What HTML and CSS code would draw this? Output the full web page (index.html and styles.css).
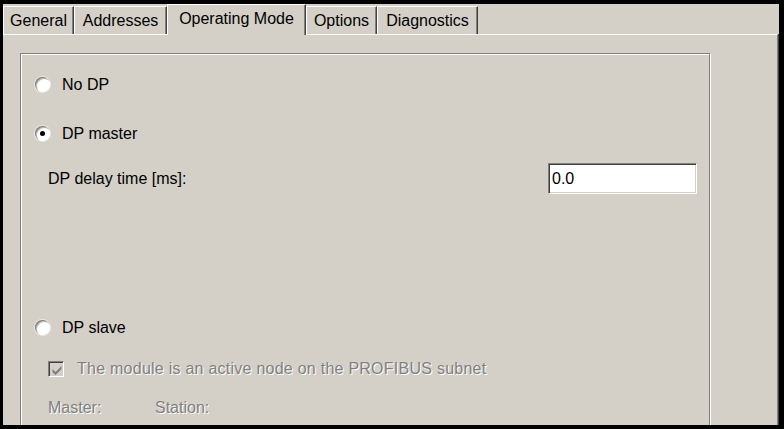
FILE: index.html
```html
<!DOCTYPE html>
<html>
<head>
<meta charset="utf-8">
<link rel="stylesheet" href="styles.css">
</head>
<body>
<div class="frame">
  <div class="dialog">
    <div class="tabs">
      <div class="tab t1">General</div>
      <div class="tab t2">Addresses</div>
      <div class="tab t3 sel">Operating Mode</div>
      <div class="tab t4">Options</div>
      <div class="tab t5">Diagnostics</div>
    </div>
    <div class="page">
      <div class="group">
        <div class="row radio-row r1"><span class="radio"></span><span class="label">No DP</span></div>
        <div class="row radio-row r2"><span class="radio on"></span><span class="label">DP master</span></div>
        <div class="row field-row r3"><span class="label">DP delay time [ms]:</span><div class="input">0.0</div></div>
        <div class="row radio-row r4"><span class="radio"></span><span class="label">DP slave</span></div>
        <div class="row check-row r5">
          <span class="check"><svg width="12" height="12" viewBox="0 0 12 12"><path d="M1.5 5 L4.5 8 L10.5 2 L10.5 5 L4.5 11 L1.5 8 Z" fill="#808080"/></svg></span>
          <span class="label disabled wide">The module is an active node on the PROFIBUS subnet</span>
        </div>
        <div class="row sub-row r6"><span class="label disabled master">Master:</span><span class="label disabled">Station:</span></div>
      </div>
    </div>
  </div>
</div>
</body>
</html>
```
FILE: styles.css
```css
html, body {
  margin: 0;
  padding: 0;
  background: #000;
}
.frame {
  width: 784px;
  height: 429px;
  box-sizing: border-box;
  padding: 4px 5px 4px 3px;
  background: #000;
}
.dialog {
  height: 100%;
  background: #d4d0c8;
  display: flex;
  flex-direction: column;
  overflow: hidden;
  font: 16px "Liberation Sans", Arial, sans-serif;
  color: #000;
}
.tabs {
  display: flex;
  align-items: flex-end;
  height: 30px;
  flex: none;
}
.tab {
  height: 28px;
  box-sizing: border-box;
  border-top: 1px solid #fff;
  border-left: 1px solid #fff;
  border-right: 1px solid #404040;
  box-shadow: inset -1px 0 #808080;
  line-height: 28px;
  text-align: center;
  white-space: nowrap;
}
.t1 { width: 71px; }
.t2 { width: 93px; }
.t3 { width: 139px; }
.t4 { width: 71px; }
.t5 { width: 101px; }
.tab.sel {
  height: 31px;
  margin-bottom: -1px;
  line-height: 28px;
  position: relative;
  z-index: 1;
  background: #d4d0c8;
}
.page {
  flex: 1;
  border-top: 1px solid #fff;
  border-right: 1px solid #808080;
  box-shadow: 1px 0 #404040;
  margin-right: 1px;
  overflow: hidden;
}
.group {
  margin: 18px 0 0 17px;
  width: 690px;
  height: 420px;
  box-sizing: border-box;
  border: 1px solid #808080;
  box-shadow: inset 1px 1px #fff, 1px 1px #fff;
  padding-top: 15px;
}
.row {
  display: flex;
  align-items: center;
  height: 30px;
  white-space: nowrap;
}
.radio-row { padding-left: 14px; }
.r1, .r2, .r4 { padding-top: 1px; box-sizing: border-box; }
.r2 { margin-top: 19px; }
.r3 { margin-top: 15px; height: 31px; }
.r4 { margin-top: 118px; }
.r5 { margin-top: 12px; }
.r6 { margin-top: 9px; }
.radio {
  width: 15px;
  height: 15px;
  border-radius: 50%;
  background: #fff;
  box-shadow: inset 1px 1px #808080, inset 2px 2px #c4c0b8, 0 0 0 1px #ece9e4;
  margin-right: 12px;
  display: flex;
  align-items: center;
  justify-content: center;
  flex: none;
}
.radio.on::after {
  content: "";
  width: 5px;
  height: 5px;
  border-radius: 50%;
  background: #000;
}
.field-row {
  padding-left: 27px;
  padding-right: 12px;
  justify-content: space-between;
}
.input {
  width: 149px;
  height: 31px;
  box-sizing: border-box;
  background: #fff;
  border-top: 1px solid #808080;
  border-left: 1px solid #808080;
  border-bottom: 1px solid #fff;
  border-right: 1px solid #fff;
  box-shadow: inset 1px 1px #404040, inset -1px -1px #d4d0c8;
  padding-left: 3px;
  line-height: 29px;
}
.check-row { padding-left: 27px; }
.check {
  width: 16px;
  height: 16px;
  box-sizing: border-box;
  background: #d4d0c8;
  border-top: 1px solid #808080;
  border-left: 1px solid #808080;
  border-bottom: 1px solid #fff;
  border-right: 1px solid #fff;
  box-shadow: inset 1px 1px #404040;
  margin-right: 13px;
  display: flex;
  align-items: center;
  justify-content: center;
  flex: none;
}
.check svg { display: block; margin: 1px 0 0 1px; }
.disabled {
  color: #808080;
  text-shadow: 1px 1px 0 #fff;
}
.wide { letter-spacing: 0.25px; }
.sub-row { padding-left: 27px; }
.master {
  display: inline-block;
  width: 107px;
}
```
